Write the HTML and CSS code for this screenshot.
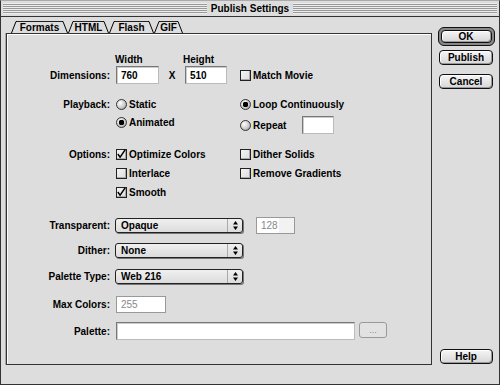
FILE: index.html
```html
<!DOCTYPE html>
<html lang="en">
<head>
    <meta charset="UTF-8">
    <title>Publish Settings</title>
    <link rel="stylesheet" href="styles.css">
</head>
<body>
    <div class="window">
        <div class="titlebar">
            <span class="stripes"></span>
            <span class="title">Publish Settings</span>
            <span class="stripes"></span>
        </div>
        <div class="content">
            <div class="main">
                <div class="tabs">
                    <span class="tab t-formats">Formats</span>
                    <span class="tab t-html">HTML</span>
                    <span class="tab t-flash">Flash</span>
                    <span class="tab t-gif active">GIF</span>
                </div>
                <div class="panel">
                    <div class="row r-head">
                        <span class="lbl"></span>
                        <span class="head-w">Width</span>
                        <span class="head-h">Height</span>
                    </div>
                    <div class="row r-dims">
                        <span class="lbl">Dimensions:</span>
                        <span class="field f-w">760</span>
                        <span class="times">X</span>
                        <span class="field f-h">510</span>
                        <span class="opt match"><span class="cb"></span>Match Movie</span>
                    </div>

                    <div class="row r-playback">
                        <span class="lbl">Playback:</span>
                        <span class="col"><span class="opt"><span class="rb"></span>Static</span></span>
                        <span class="opt"><span class="rb on"></span>Loop Continuously</span>
                    </div>
                    <div class="row">
                        <span class="lbl"></span>
                        <span class="col"><span class="opt"><span class="rb on"></span>Animated</span></span>
                        <span class="opt repeat"><span class="rb"></span>Repeat<span class="field f-rep"></span></span>
                    </div>

                    <div class="row r-options">
                        <span class="lbl">Options:</span>
                        <span class="col"><span class="opt"><span class="cb on"><svg width="11" height="11" viewBox="0 0 11 11"><path d="M2 5 L4.5 8.5 L10 0.5" stroke="#000" stroke-width="1.6" fill="none"/></svg></span>Optimize Colors</span></span>
                        <span class="opt"><span class="cb"></span>Dither Solids</span>
                    </div>
                    <div class="row r-stack">
                        <span class="lbl"></span>
                        <span class="col"><span class="opt"><span class="cb"></span>Interlace</span></span>
                        <span class="opt"><span class="cb"></span>Remove Gradients</span>
                    </div>
                    <div class="row r-stack">
                        <span class="lbl"></span>
                        <span class="col"><span class="opt"><span class="cb on"><svg width="11" height="11" viewBox="0 0 11 11"><path d="M2 5 L4.5 8.5 L10 0.5" stroke="#000" stroke-width="1.6" fill="none"/></svg></span>Smooth</span></span>
                    </div>

                    <div class="row r-transparent">
                        <span class="lbl">Transparent:</span>
                        <span class="popup"><span class="popup-text">Opaque</span><span class="popup-arrow"><svg width="5" height="9" viewBox="0 0 5 9"><path d="M2.5 0 L5 3.5 H0Z M0 5.5 H5 L2.5 9Z" fill="#000"/></svg></span></span>
                        <span class="field off f-alpha">128</span>
                    </div>
                    <div class="row r-dither">
                        <span class="lbl">Dither:</span>
                        <span class="popup"><span class="popup-text">None</span><span class="popup-arrow"><svg width="5" height="9" viewBox="0 0 5 9"><path d="M2.5 0 L5 3.5 H0Z M0 5.5 H5 L2.5 9Z" fill="#000"/></svg></span></span>
                    </div>
                    <div class="row r-ptype">
                        <span class="lbl">Palette Type:</span>
                        <span class="popup"><span class="popup-text">Web 216</span><span class="popup-arrow"><svg width="5" height="9" viewBox="0 0 5 9"><path d="M2.5 0 L5 3.5 H0Z M0 5.5 H5 L2.5 9Z" fill="#000"/></svg></span></span>
                    </div>

                    <div class="row r-max">
                        <span class="lbl">Max Colors:</span>
                        <span class="field off f-max">255</span>
                    </div>
                    <div class="row r-palette">
                        <span class="lbl">Palette:</span>
                        <span class="field f-pal"></span>
                        <span class="browse">...</span>
                    </div>
                </div>
            </div>
            <div class="side">
                <div class="ring"><span class="btn b-ok">OK</span></div>
                <span class="btn b-publish">Publish</span>
                <span class="btn b-cancel">Cancel</span>
                <span class="btn b-help">Help</span>
            </div>
        </div>
    </div>
</body>
</html>
```

FILE: styles.css
```css
* {
    margin: 0;
    padding: 0;
    box-sizing: border-box;
}
body {
    background: #ddd;
    font: bold 10px "Liberation Sans", Arial, sans-serif;
    color: #000;
}
.window {
    width: 500px;
    height: 385px;
    border: 1px solid #333;
    border-top-color: #aaa;
    background: #ddd;
}

/* title bar */
.titlebar {
    height: 16px;
    display: flex;
    align-items: center;
    padding: 0 2px;
    border-bottom: 1px solid #333;
}
.stripes {
    flex: 1;
    height: 11px;
    background: repeating-linear-gradient(#eee 0 1px, #999 1px 2px);
}
.title {
    padding: 0 4px;
    font-size: 10px;
}

.content {
    display: flex;
    height: 367px;
    padding: 4px 0 0 5px;
}
.main {
    width: 426px;
    display: flex;
    flex-direction: column;
}

/* tabs */
.tabs {
    display: flex;
    height: 12px;
    padding-left: 5px;
}
.tab {
    height: 12px;
    display: flex;
    align-items: center;
    justify-content: center;
    padding-top: 1px;
    background:
        url("data:image/svg+xml,<svg xmlns='http://www.w3.org/2000/svg' width='6' height='12'><path d='M0.5 12 L5 0.5 L6 0.5' stroke='black' fill='none'/></svg>") left top no-repeat,
        url("data:image/svg+xml,<svg xmlns='http://www.w3.org/2000/svg' width='6' height='12'><path d='M0 0.5 L1 0.5 L5.5 12' stroke='black' fill='none'/></svg>") right top no-repeat,
        linear-gradient(#222, #222) 6px 0 / calc(100% - 12px) 1px no-repeat;
}
.t-formats { width: 57px; }
.t-html { width: 41px; }
.t-flash { width: 45px; }
.t-gif { width: 29px; }

/* panel */
.panel {
    height: 332px;
    border: 1px solid #333;
    box-shadow: inset 1px 1px 0 #fff, -1px 0 0 #aaa;
    display: flex;
    flex-direction: column;
}
.row {
    display: flex;
    align-items: center;
    height: 18px;
}
.lbl {
    width: 103px;
    margin-right: 6px;
    text-align: right;
}
.col {
    width: 124px;
    display: flex;
    align-items: center;
}
.opt {
    display: flex;
    align-items: center;
    gap: 2px;
}

.r-head {
    height: 14px;
    margin-top: 18px;
}
.head-w {
    width: 68px;
    margin-left: -1px;
}
.r-dims {
    height: 18px;
}
.r-playback { margin-top: 11px; }
.r-options { margin-top: 14px; }
.r-stack { margin-top: 1px; }
.r-transparent { margin-top: 15px; }
.r-dither { margin-top: 7px; }
.r-ptype { margin-top: 8px; }
.r-max { margin-top: 10px; }
.r-palette { margin-top: 9px; }

/* fields */
.field {
    height: 18px;
    display: flex;
    align-items: center;
    padding-left: 4px;
    background: #fff;
    border: 1px solid #777;
    border-right-color: #bbb;
    border-bottom-color: #bbb;
    box-shadow: inset 1px 1px 0 #ccc;
}
.f-w { width: 43px; }
.f-h { width: 42px; }
.times {
    width: 26px;
    text-align: center;
}
.match { margin-left: 13px; }
.repeat .field {
    margin-left: 14px;
}
.repeat {
    margin-top: 6px;
}
.f-rep {
    width: 32px;
    height: 18px;
}
.field.off {
    color: #888;
    font-weight: normal;
    height: 17px;
    border-color: #999;
    box-shadow: none;
}
.f-alpha {
    width: 39px;
    margin-left: 13px;
    background: linear-gradient(90deg, #fff 0 22px, #f2f2f2 22px);
}
.f-max { width: 50px; }
.f-pal {
    width: 239px;
    height: 18px;
}
.browse {
    width: 28px;
    height: 16px;
    margin-left: 4px;
    margin-top: -2px;
    border: 1px solid #999;
    border-radius: 3px;
    background: #e2e2e2;
    color: #888;
    font-weight: normal;
    font-size: 9px;
    display: flex;
    align-items: center;
    justify-content: center;
}

/* check boxes and radios */
.cb {
    width: 11px;
    height: 11px;
    border: 1px solid #222;
    background: linear-gradient(135deg, #f4f4f4, #ddd);
    box-shadow: inset -1px -1px 0 #aaa;
    display: flex;
}
.cb svg {
    margin: -1px 0 0 -1px;
}
.rb {
    width: 11px;
    height: 11px;
    border: 1px solid #333;
    border-radius: 50%;
    background: radial-gradient(circle at 35% 35%, #fff 0, #ccc 55%, #888 100%);
}
.rb.on {
    background:
        radial-gradient(circle, #000 0 2.6px, transparent 3px),
        radial-gradient(circle at 35% 35%, #fff 0, #ccc 55%, #888 100%);
}

/* popup menus */
.popup {
    width: 128px;
    height: 15px;
    margin-left: -1px;
    display: flex;
    align-items: center;
    border: 1px solid #222;
    border-radius: 3px;
    background: linear-gradient(#f0f0f0, #dcdcdc);
    box-shadow: 1px 1px 0 #777;
}
.popup-text {
    flex: 1;
    padding-left: 5px;
}
.popup-arrow {
    width: 15px;
    height: 100%;
    display: flex;
    align-items: center;
    justify-content: center;
    border-left: 1px solid #aaa;
}

/* buttons */
.side {
    width: 58px;
    margin-left: 5px;
    display: flex;
    flex-direction: column;
    align-items: center;
    padding-bottom: 20px;
}
.ring {
    margin-top: 6px;
    padding: 2px;
    border: 1px solid #111;
    border-radius: 6px;
    background: #888;
}
.btn {
    display: flex;
    align-items: center;
    justify-content: center;
    width: 54px;
    height: 15px;
    border: 1px solid #111;
    border-radius: 4px;
    background: linear-gradient(#f6f6f6, #d6d6d6);
    box-shadow: inset 1px 1px 0 #fff, inset -1px -1px 0 #999;
}
.b-ok {
    width: 51px;
    height: 13px;
}
.b-publish { margin-top: 4px; }
.b-cancel { margin-top: 9px; }
.b-help {
    margin-top: auto;
    width: 53px;
}
```
